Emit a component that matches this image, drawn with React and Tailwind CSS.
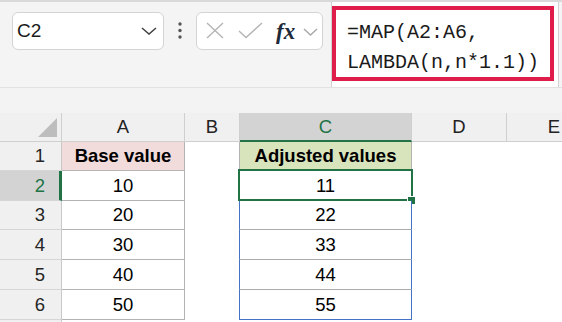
import React from 'react';

const font = { fontFamily: '"Liberation Sans", Arial, sans-serif' };

const rows = [
  { n: 1, a: 'Base value', c: 'Adjusted values', h: 'h-[29px]' },
  { n: 2, a: '10', c: '11', h: 'h-[30px]' },
  { n: 3, a: '20', c: '22', h: 'h-[29px]' },
  { n: 4, a: '30', c: '33', h: 'h-[30px]' },
  { n: 5, a: '40', c: '44', h: 'h-[30px]' },
  { n: 6, a: '50', c: '55', h: 'h-[30px]' },
];

function Toolbar() {
  return (
    <div className="flex h-[88px] shrink-0 border-t-2 border-b border-t-[#d9d9d9] border-b-[#e2e2e2] bg-[#f4f4f4]">
      {/* name box */}
      <div className="ml-[12px] mt-[10px] flex h-[38px] w-[152px] items-center justify-between rounded-md border border-[#d4d4d4] bg-white pl-[4px] pr-[6px]">
        <span className="text-[19px] text-[#1a1a1a]">C2</span>
        <svg width="16" height="10" viewBox="0 0 16 10">
          <polyline points="1,2 8,8 15,2" fill="none" stroke="#404040" strokeWidth="1.5" />
        </svg>
      </div>
      {/* dots */}
      <svg width="32" height="50" viewBox="0 0 32 50" className="shrink-0">
        <circle cx="16" cy="22" r="1.7" fill="#555" />
        <circle cx="16" cy="28.5" r="1.7" fill="#555" />
        <circle cx="16" cy="35" r="1.7" fill="#555" />
      </svg>
      {/* cancel / enter / fx */}
      <div className="mt-[10px] flex h-[38px] w-[127px] items-center rounded-md border border-[#d4d4d4] bg-white">
        <svg width="20" height="20" viewBox="0 0 20 20" className="ml-[8px]">
          <path d="M2 2 L18 17 M18 2 L2 17" stroke="#b4b4b4" strokeWidth="1.4" fill="none" />
        </svg>
        <svg width="26" height="20" viewBox="0 0 26 20" className="ml-[13px]">
          <path d="M1 10 L8 16.5 L24 2" stroke="#b4b4b4" strokeWidth="1.4" fill="none" />
        </svg>
        <span
          className="ml-[12px] text-[23px] font-bold italic leading-none text-[#1d2a3a]"
          style={{ fontFamily: '"Liberation Serif", "Times New Roman", serif' }}
        >
          fx
        </span>
        <svg width="15" height="10" viewBox="0 0 15 10" className="ml-[8px] mt-[2px]">
          <polyline points="1,2 7.5,8 14,2" fill="none" stroke="#a8a8a8" strokeWidth="1.4" />
        </svg>
      </div>
      {/* formula bar */}
      <div className="ml-[8px] w-[228px] shrink-0 border-x border-[#d2d2d2] bg-white">
        <div
          className="mt-[4px] h-[75px] w-[222px] border-4 border-[#df1d4b] pl-[11px] pt-[8px] text-[20px] leading-[30px] text-[#1a1a1a]"
          style={{ fontFamily: '"Liberation Mono", "Courier New", monospace' }}
        >
          <div>=MAP(A2:A6,</div>
          <div>LAMBDA(n,n*1.1))</div>
        </div>
      </div>
    </div>
  );
}

function HeaderRow() {
  const cell = 'flex shrink-0 items-center justify-center border-b border-r border-[#cfcfcf]';
  return (
    <div className="flex h-[29px] shrink-0 bg-[#f0f0f0] text-[18.5px] text-[#222]">
      <div className={`${cell} w-[62px]`}>
        <svg width="61" height="28" viewBox="0 0 61 28">
          <polygon points="57,5 57,24 38,24" fill="#bdbdbd" />
        </svg>
      </div>
      <div className={`${cell} w-[123px]`}>A</div>
      <div className={`${cell} w-[55px]`}>B</div>
      <div className="flex w-[172px] shrink-0 items-center justify-center border-r border-b-2 border-r-[#cfcfcf] border-b-[#217346] bg-[#d3d3d3] text-[#217346]">
        C
      </div>
      <div className={`${cell} w-[95px]`}>D</div>
      <div className={`${cell} w-[95px]`}>E</div>
    </div>
  );
}

function DataRow({ r }) {
  const selected = r.n === 2;
  const rowHead = selected
    ? 'bg-[#d3d3d3] text-[#217346] border-r-[3px] border-r-[#217346] pr-[14px]'
    : 'bg-[#f0f0f0] text-[#262626] border-r border-r-[#c8c8c8] pr-4';

  let cCls;
  if (r.n === 1) {
    cCls = 'bg-[#d8e4bc] font-bold border-l border-r border-b border-[#b4b4b4]';
  } else {
    cCls = `bg-white border-l border-r border-b border-l-[#4472c4] border-r-[#4472c4] ${
      r.n === 6 ? 'border-b-[#4472c4]' : 'border-b-[#ababab]'
    }`;
  }

  return (
    <div className={`flex shrink-0 ${r.h}`}>
      <div className={`flex w-[62px] shrink-0 items-center justify-end border-b border-b-[#d6d6d6] ${rowHead}`}>
        {r.n}
      </div>
      <div
        className={`flex w-[123px] shrink-0 items-center justify-center border-b border-r border-[#b4b4b4] ${
          r.n === 1 ? 'bg-[#f2dcdb] font-bold' : 'bg-white'
        }`}
      >
        {r.a}
      </div>
      <div className="w-[54px] shrink-0" />
      <div className={`relative flex w-[173px] shrink-0 items-center justify-center ${cCls}`}>
        {r.c}
        {selected && (
          <>
            <div className="absolute -left-[2px] -right-[2px] -top-[2px] -bottom-[1px] border-[2.5px] border-[#217346]" />
            <div className="absolute -bottom-[5px] -right-[5px] h-[9px] w-[9px] border border-white bg-[#217346]" />
          </>
        )}
      </div>
      <div className="flex-1" />
    </div>
  );
}

export default function App() {
  return (
    <div className="flex h-[322px] w-[562px] flex-col overflow-hidden bg-white text-black" style={font}>
      <Toolbar />
      <div className="h-[25px] shrink-0 bg-[#f3f3f3]" />
      <HeaderRow />
      <div className="text-[18.5px]">
        {rows.map(r => (
          <DataRow key={r.n} r={r} />
        ))}
      </div>
      <div className="flex flex-1">
        <div className="w-[62px] shrink-0 border-r border-r-[#c8c8c8] bg-[#f0f0f0]" />
      </div>
    </div>
  );
}
